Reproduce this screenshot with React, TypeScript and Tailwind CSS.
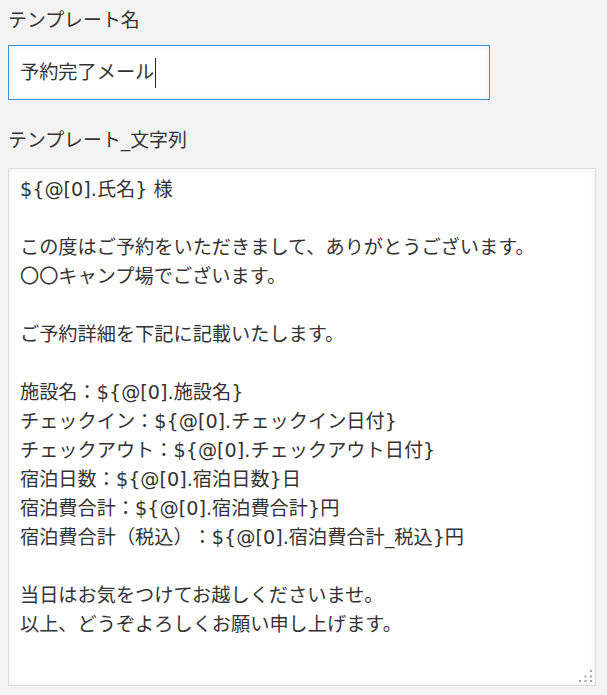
import React from "react";

const body = `\${@[0].氏名} 様

この度はご予約をいただきまして、ありがとうございます。
〇〇キャンプ場でございます。

ご予約詳細を下記に記載いたします。

施設名：\${@[0].施設名}
チェックイン：\${@[0].チェックイン日付}
チェックアウト：\${@[0].チェックアウト日付}
宿泊日数：\${@[0].宿泊日数}日
宿泊費合計：\${@[0].宿泊費合計}円
宿泊費合計（税込）：\${@[0].宿泊費合計_税込}円

当日はお気をつけてお越しくださいませ。
以上、どうぞよろしくお願い申し上げます。`;

export default function App() {
  return (
    <div
      className="min-h-screen bg-[#f3f3f3] px-2 pt-2 text-[18.9px] text-[#333] leading-[24px] [text-spacing-trim:space-all]"
      style={{ fontFamily: '"DejaVu Sans", "Open Sans", "Noto Sans CJK JP", sans-serif' }}
    >
      <div>テンプレート名</div>
      <div className="mt-[13px] flex h-[55px] w-[482px] items-center border border-[#3c8fd4] bg-white pl-[11px] text-[19.2px] shadow-[inset_0_0_6px_rgba(0,0,0,0.07)]">
        <span>予約完了メール</span>
        <span className="ml-[1px] inline-block h-[30px] w-[1px] bg-[#222]" />
      </div>

      <div className="mt-[28px]">テンプレート_文字列</div>
      <div className="relative mt-[16px] h-[518px] w-[588px] border border-[#dcdcdc] bg-white px-[11px] pt-[6px] text-[19.2px] shadow-[inset_0_0_6px_rgba(0,0,0,0.07)]">
        <div className="whitespace-pre-wrap leading-[29px]">{body}</div>
        <svg
          className="absolute right-[2px] bottom-[2px]"
          width="14"
          height="14"
          viewBox="0 0 14 14"
        >
          <g fill="#9ea4ad">
            <rect x="11" y="1" width="2" height="2" />
            <rect x="5.5" y="6.5" width="2" height="2" />
            <rect x="11" y="6.5" width="2" height="2" />
            <rect x="0" y="11" width="2" height="2" />
            <rect x="5.5" y="11" width="2" height="2" />
            <rect x="11" y="11" width="2" height="2" />
          </g>
        </svg>
      </div>
    </div>
  );
}
